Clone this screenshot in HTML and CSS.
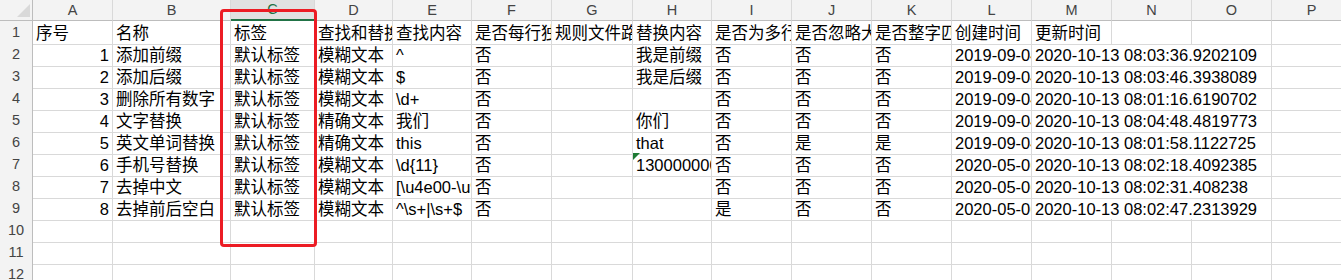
FILE: index.html
```html
<!DOCTYPE html>
<html lang="zh">
<head>
<meta charset="utf-8">
<title>Sheet</title>
<link rel="stylesheet" href="styles.css">
</head>
<body>
<div class="sheet">
  <div class="row head">
    <div class="corner"></div>
    <div class="h">A</div><div class="h">B</div><div class="h sel">C</div><div class="h">D</div><div class="h">E</div><div class="h">F</div><div class="h">G</div><div class="h">H</div><div class="h">I</div><div class="h">J</div><div class="h">K</div><div class="h">L</div><div class="h">M</div><div class="h">N</div><div class="h">O</div><div class="h">P</div>
  </div>
  <div class="row">
    <div class="r">1</div>
    <div class="c">序号</div><div class="c">名称</div><div class="c">标签</div><div class="c">查找和替换方式</div><div class="c">查找内容</div><div class="c">是否每行独立</div><div class="c">规则文件路径</div><div class="c">替换内容</div><div class="c">是否为多行匹配</div><div class="c">是否忽略大小写</div><div class="c">是否整字匹配</div><div class="c">创建时间</div><div class="c">更新时间</div><div class="c"></div><div class="c"></div><div class="c"></div>
  </div>
  <div class="row">
    <div class="r">2</div>
    <div class="c num">1</div><div class="c">添加前缀</div><div class="c">默认标签</div><div class="c">模糊文本</div><div class="c">^</div><div class="c">否</div><div class="c"></div><div class="c">我是前缀</div><div class="c">否</div><div class="c">否</div><div class="c">否</div><div class="c">2019-09-04 10:21:33</div><div class="c wide">2020-10-13 08:03:36.9202109</div><div class="c"></div>
  </div>
  <div class="row">
    <div class="r">3</div>
    <div class="c num">2</div><div class="c">添加后缀</div><div class="c">默认标签</div><div class="c">模糊文本</div><div class="c">$</div><div class="c">否</div><div class="c"></div><div class="c">我是后缀</div><div class="c">否</div><div class="c">否</div><div class="c">否</div><div class="c">2019-09-04 10:22:10</div><div class="c wide">2020-10-13 08:03:46.3938089</div><div class="c"></div>
  </div>
  <div class="row">
    <div class="r">4</div>
    <div class="c num">3</div><div class="c">删除所有数字</div><div class="c">默认标签</div><div class="c">模糊文本</div><div class="c">\d+</div><div class="c">否</div><div class="c"></div><div class="c"></div><div class="c">否</div><div class="c">否</div><div class="c">否</div><div class="c">2019-09-04 10:23:45</div><div class="c wide">2020-10-13 08:01:16.6190702</div><div class="c"></div>
  </div>
  <div class="row">
    <div class="r">5</div>
    <div class="c num">4</div><div class="c">文字替换</div><div class="c">默认标签</div><div class="c">精确文本</div><div class="c">我们</div><div class="c">否</div><div class="c"></div><div class="c">你们</div><div class="c">否</div><div class="c">否</div><div class="c">否</div><div class="c">2019-09-04 10:25:02</div><div class="c wide">2020-10-13 08:04:48.4819773</div><div class="c"></div>
  </div>
  <div class="row">
    <div class="r">6</div>
    <div class="c num">5</div><div class="c">英文单词替换</div><div class="c">默认标签</div><div class="c">精确文本</div><div class="c">this</div><div class="c">否</div><div class="c"></div><div class="c">that</div><div class="c">否</div><div class="c">是</div><div class="c">是</div><div class="c">2019-09-04 10:26:18</div><div class="c wide">2020-10-13 08:01:58.1122725</div><div class="c"></div>
  </div>
  <div class="row">
    <div class="r">7</div>
    <div class="c num">6</div><div class="c">手机号替换</div><div class="c">默认标签</div><div class="c">模糊文本</div><div class="c">\d{11}</div><div class="c">否</div><div class="c"></div><div class="c flag">13000000000</div><div class="c">否</div><div class="c">否</div><div class="c">否</div><div class="c">2020-05-06 09:12:40</div><div class="c wide">2020-10-13 08:02:18.4092385</div><div class="c"></div>
  </div>
  <div class="row">
    <div class="r">8</div>
    <div class="c num">7</div><div class="c">去掉中文</div><div class="c">默认标签</div><div class="c">模糊文本</div><div class="c">[\u4e00-\u9fa5]</div><div class="c">否</div><div class="c"></div><div class="c"></div><div class="c">否</div><div class="c">否</div><div class="c">否</div><div class="c">2020-05-06 09:14:05</div><div class="c wide">2020-10-13 08:02:31.408238</div><div class="c"></div>
  </div>
  <div class="row">
    <div class="r">9</div>
    <div class="c num">8</div><div class="c">去掉前后空白</div><div class="c">默认标签</div><div class="c">模糊文本</div><div class="c">^\s+|\s+$</div><div class="c">否</div><div class="c"></div><div class="c"></div><div class="c">是</div><div class="c">否</div><div class="c">否</div><div class="c">2020-05-06 09:15:27</div><div class="c wide">2020-10-13 08:02:47.2313929</div><div class="c"></div>
  </div>
  <div class="row">
    <div class="r">10</div>
    <div class="c"></div><div class="c"></div><div class="c"></div><div class="c"></div><div class="c"></div><div class="c"></div><div class="c"></div><div class="c"></div><div class="c"></div><div class="c"></div><div class="c"></div><div class="c"></div><div class="c"></div><div class="c"></div><div class="c"></div><div class="c"></div>
  </div>
  <div class="row">
    <div class="r">11</div>
    <div class="c"></div><div class="c"></div><div class="c"></div><div class="c"></div><div class="c"></div><div class="c"></div><div class="c"></div><div class="c"></div><div class="c"></div><div class="c"></div><div class="c"></div><div class="c"></div><div class="c"></div><div class="c"></div><div class="c"></div><div class="c"></div>
  </div>
  <div class="row">
    <div class="r">12</div>
    <div class="c"></div><div class="c"></div><div class="c"></div><div class="c"></div><div class="c"></div><div class="c"></div><div class="c"></div><div class="c"></div><div class="c"></div><div class="c"></div><div class="c"></div><div class="c"></div><div class="c"></div><div class="c"></div><div class="c"></div><div class="c"></div>
  </div>
  <div class="highlight"></div>
</div>
</body>
</html>
```

FILE: styles.css
```css
html, body {
  margin: 0;
  padding: 0;
  background: #ffffff;
  overflow: hidden;
}

.sheet {
  position: relative;
  width: 1352px;
  font-family: "Liberation Sans", "Noto Sans CJK SC", sans-serif;
}

.row {
  display: grid;
  grid-template-columns: 33px 80px 118px 84px 78px 79px 80px 81px 79px 80px 80px 80px 80px 80px 80px 80px 80px;
  height: 22px;
}

.row.head {
  height: 21px;
}

.corner {
  position: relative;
  background: #f3f3f3;
  border-right: 1px solid #bdbdbd;
  border-bottom: 1px solid #bdbdbd;
  box-sizing: border-box;
}

.corner::after {
  content: "";
  position: absolute;
  right: 2px;
  bottom: 3px;
  width: 13px;
  height: 13px;
  background: #d9d9d9;
  clip-path: polygon(100% 0, 100% 100%, 0 100%);
}

.h {
  box-sizing: border-box;
  background: #f3f3f3;
  border-right: 1px solid #d9d9d9;
  border-bottom: 1px solid #bdbdbd;
  color: #444444;
  font-size: 14.5px;
  line-height: 20px;
  text-align: center;
}

.h.sel {
  background: #e1e1e1;
  color: #217346;
  border-bottom: 2px solid #217346;
  line-height: 19px;
}

.r {
  box-sizing: border-box;
  background: #f3f3f3;
  border-right: 1px solid #bdbdbd;
  border-bottom: 1px solid #d9d9d9;
  color: #444444;
  font-size: 14.5px;
  line-height: 23px;
  text-align: center;
}

.c {
  box-sizing: border-box;
  border-right: 1px solid #d9d9d9;
  border-bottom: 1px solid #d9d9d9;
  color: #000000;
  font-size: 16.5px;
  line-height: 24px;
  padding: 0 0 0 3px;
  white-space: nowrap;
  overflow: hidden;
}

.c.num {
  text-align: right;
  padding: 0 3px 0 0;
}

.c.wide {
  grid-column: span 3;
}

.c.flag {
  position: relative;
}

.c.flag::before {
  content: "";
  position: absolute;
  left: 0;
  top: 0;
  width: 7px;
  height: 7px;
  background: #1d7a34;
  clip-path: polygon(0 0, 100% 0, 0 100%);
}

.highlight {
  position: absolute;
  left: 220px;
  top: 9px;
  width: 97px;
  height: 238px;
  box-sizing: border-box;
  border: 3px solid #ec1c24;
  border-radius: 4px;
  pointer-events: none;
}
```
